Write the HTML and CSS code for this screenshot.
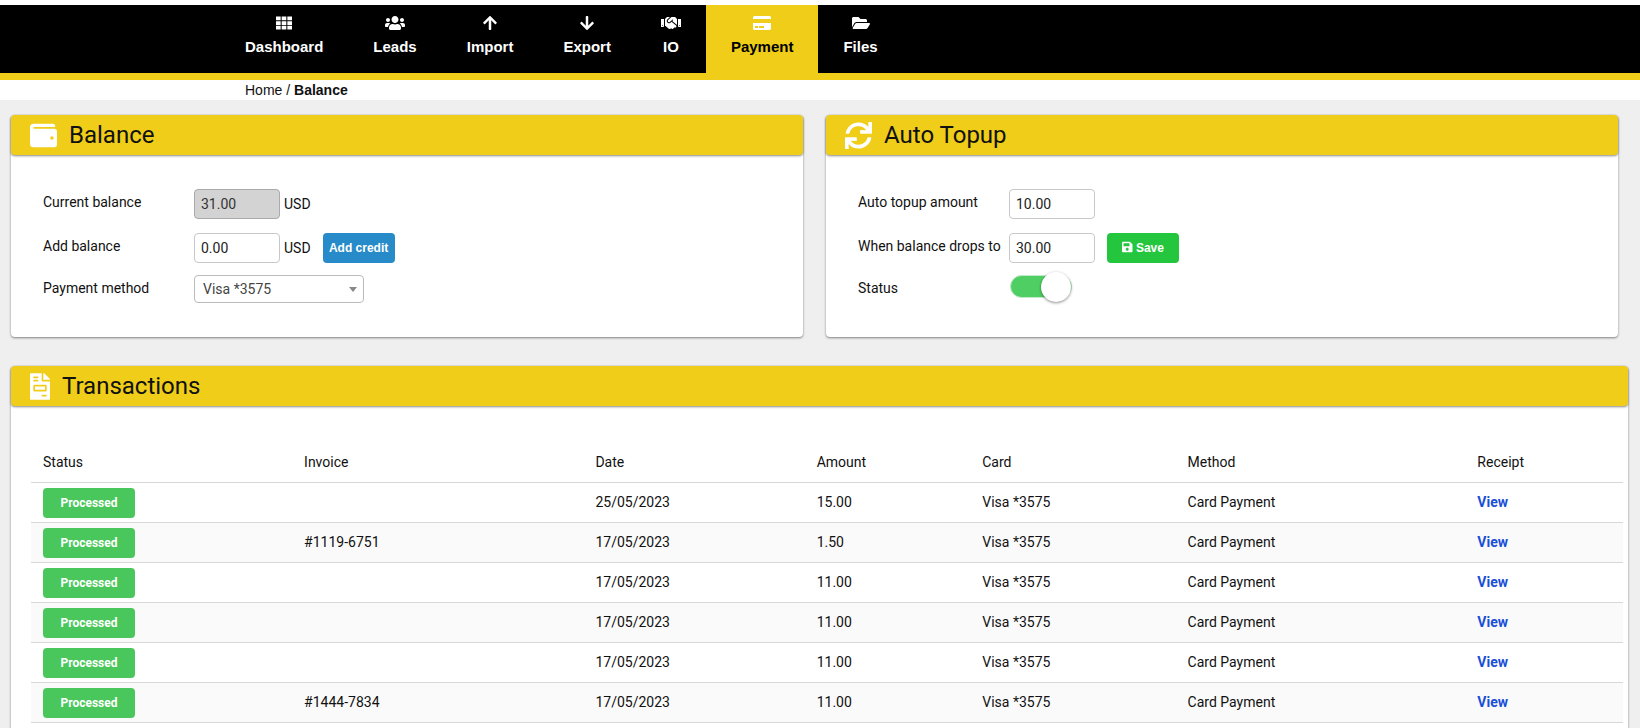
FILE: index.html
```html
<!DOCTYPE html>
<html lang="en">
<head>
  <meta charset="UTF-8">
  <title>Balance</title>
  <link rel="stylesheet" href="styles.css">
</head>
<body>

<header class="header">
  <nav class="nav">
    <a href="#">
      <svg viewBox="0 0 512 512"><path d="M0 48h149v120H0zM181 48h150v120H181zM363 48h149v120H363zM0 196h149v120H0zM181 196h150v120H181zM363 196h149v120H363zM0 344h149v120H0zM181 344h150v120H181zM363 344h149v120H363z"/></svg>
      Dashboard
    </a>
    <a href="#">
      <svg viewBox="0 0 640 512"><path d="M96 224c35.300 0 64-28.700 64-64s-28.700-64-64-64-64 28.700-64 64 28.700 64 64 64zm448 0c35.300 0 64-28.700 64-64s-28.700-64-64-64-64 28.700-64 64 28.700 64 64 64zm32 32h-64c-17.600 0-33.500 7.100-45.100 18.600 40.300 22.100 68.900 62 75.100 109.400h66c17.700 0 32-14.300 32-32v-32c0-35.300-28.700-64-64-64zm-256 0c61.900 0 112-50.100 112-112S381.900 32 320 32 208 82.100 208 144s50.100 112 112 112zm76.800 32h-8.300c-20.800 10-43.900 16-68.500 16s-47.600-6-68.500-16h-8.300C179.600 288 128 339.600 128 403.200V432c0 26.500 21.500 48 48 48h288c26.500 0 48-21.500 48-48v-28.800c0-63.600-51.600-115.200-115.200-115.200zm-223.700-13.400C161.500 263.100 145.600 256 128 256H64c-35.300 0-64 28.700-64 64v32c0 17.700 14.300 32 32 32h65.900c6.300-47.400 34.900-87.300 75.200-109.400z"/></svg>
      Leads
    </a>
    <a href="#">
      <svg viewBox="0 0 448 512"><path d="M34.900 289.500l-22.200-22.200c-9.400-9.400-9.400-24.600 0-33.900L207 39c9.400-9.400 24.600-9.400 33.900 0l194.300 194.300c9.400 9.400 9.400 24.600 0 33.900L413 289.400c-9.500 9.500-25 9.300-34.300-.4L264 168.600V456c0 13.300-10.700 24-24 24h-32c-13.300 0-24-10.700-24-24V168.600L69.200 289.100c-9.300 9.800-24.800 10-34.300.4z"/></svg>
      Import
    </a>
    <a href="#">
      <svg viewBox="0 0 448 512"><path d="M413.100 222.500l22.200 22.200c9.400 9.400 9.400 24.600 0 33.900L241 473c-9.400 9.400-24.600 9.400-33.900 0L12.700 278.600c-9.400-9.400-9.400-24.600 0-33.900l22.200-22.200c9.500-9.500 25-9.300 34.300.4L184 343.400V56c0-13.300 10.700-24 24-24h32c13.300 0 24 10.700 24 24v287.400l114.800-120.500c9.300-9.800 24.800-10 34.300-.4z"/></svg>
      Export
    </a>
    <a href="#">
      <svg viewBox="0 0 640 512"><path d="M434.7 64h-85.900c-8 0-15.700 3-21.600 8.400l-98.300 90c-.1.1-.2.3-.3.4-16.600 15.600-16.300 40.500-2.100 56 12.700 13.900 39.400 17.600 56.100 2.700.1-.1.3-.1.4-.2l79.900-73.200c6.500-5.900 16.700-5.500 22.600 1 6 6.500 5.500 16.600-1 22.600l-26.100 23.900L504 313.800c2.900 2.400 5.500 5 7.900 7.700V128l-54.600-54.600c-5.900-6-14.100-9.400-22.600-9.400zM544 128.200v223.900c0 17.700 14.300 32 32 32h64V128.200h-96zm48 223.900c-8.800 0-16-7.200-16-16s7.200-16 16-16 16 7.200 16 16-7.200 16-16 16zM0 384h64c17.700 0 32-14.300 32-32V128.200H0V384zm48-63.900c8.800 0 16 7.200 16 16s-7.200 16-16 16-16-7.200-16-16c0-8.900 7.200-16 16-16zm435.900 18.600L334.600 217.500l-30 27.500c-29.700 27.100-75.200 24.500-101.700-4.400-26.900-29.400-24.800-74.900 4.400-101.700L289.100 64h-83.800c-8.500 0-16.600 3.400-22.600 9.400L128 128v223.900h18.300l90.500 81.900c27.400 22.300 67.700 18.100 90-9.300l.2-.2 17.900 15.500c15.900 13 39.400 10.500 52.300-5.400l31.400-38.600 5.400 4.400c13.700 11.100 33.900 9.100 45-4.700l9.500-11.700c11.200-13.800 9.100-33.900-4.600-45.100z"/></svg>
      IO
    </a>
    <a href="#" class="current">
      <svg viewBox="0 0 576 512"><path d="M0 432c0 26.500 21.500 48 48 48h480c26.500 0 48-21.500 48-48V256H0v176zm192-68c0-6.600 5.400-12 12-12h136c6.600 0 12 5.400 12 12v40c0 6.600-5.400 12-12 12H204c-6.600 0-12-5.400-12-12v-40zm-128 0c0-6.600 5.400-12 12-12h72c6.600 0 12 5.400 12 12v40c0 6.600-5.400 12-12 12H76c-6.600 0-12-5.400-12-12v-40zM576 80v48H0V80c0-26.500 21.500-48 48-48h480c26.500 0 48 21.500 48 48z"/></svg>
      Payment
    </a>
    <a href="#">
      <svg viewBox="0 0 576 512"><path d="M572.700 292.100l-72.400 124.200A64 64 0 0 1 445 448H45c-18.500 0-30.100-20.100-20.700-36.100l72.400-124.200A64 64 0 0 1 152 256h400c18.500 0 30.100 20.100 20.700 36.100zM152 224h328v-48c0-26.500-21.500-48-48-48H272l-64-64H48C21.500 64 0 85.500 0 112v278l69.100-118.400C86.200 242.200 118 224 152 224z"/></svg>
      Files
    </a>
  </nav>
</header>

<div class="breadcrumb"><a href="#">Home</a> / <b>Balance</b></div>

<main class="content">
  <div class="cards">
    <section class="card">
      <h2 class="title">
        <svg viewBox="0 0 512 512"><path d="M461.200 128H80c-8.840 0-16-7.160-16-16s7.160-16 16-16h384c8.840 0 16-7.160 16-16 0-26.510-21.490-48-48-48H64C28.650 32 0 60.650 0 96v320c0 35.350 28.650 64 64 64h397.200c28.020 0 50.800-21.530 50.800-48V176c0-26.470-22.780-48-50.800-48zM416 336c-17.670 0-32-14.330-32-32s14.330-32 32-32 32 14.330 32 32-14.330 32-32 32z"/></svg>
        Balance
      </h2>
      <form class="form">
        <div class="row">
          <label for="current">Current balance</label>
          <input type="text" id="current" class="text" value="31.00" disabled>
          <span class="unit">USD</span>
        </div>
        <div class="row">
          <label for="add">Add balance</label>
          <input type="text" id="add" class="text" value="0.00">
          <span class="unit">USD</span>
          <button type="button" class="btn blue">Add credit</button>
        </div>
        <div class="row">
          <label for="method">Payment method</label>
          <div class="select">
            <select id="method"><option>Visa *3575</option></select>
          </div>
        </div>
      </form>
    </section>

    <section class="card">
      <h2 class="title">
        <svg viewBox="0 0 512 512"><path d="M440.650 12.570l4 82.770A247.160 247.160 0 0 0 255.830 8C134.730 8 33.910 94.920 12.290 209.820A12 12 0 0 0 24.090 224h49.050a12 12 0 0 0 11.670-9.260 175.910 175.910 0 0 1 317-56.940l-101.460-4.860a12 12 0 0 0-12.570 12v47.410a12 12 0 0 0 12 12H500a12 12 0 0 0 12-12V12a12 12 0 0 0-12-12h-47.370a12 12 0 0 0-11.980 12.570zM255.830 432a175.610 175.610 0 0 1-146-77.800l101.800 4.870a12 12 0 0 0 12.570-12v-47.400a12 12 0 0 0-12-12H12a12 12 0 0 0-12 12V500a12 12 0 0 0 12 12h47.350a12 12 0 0 0 12-12.600l-4.150-82.570A247.170 247.170 0 0 0 255.830 504c121.110 0 221.930-86.920 243.550-201.820a12 12 0 0 0-11.800-14.180h-49.050a12 12 0 0 0-11.670 9.260A175.860 175.860 0 0 1 255.830 432z"/></svg>
        Auto Topup
      </h2>
      <form class="form">
        <div class="row">
          <label for="topup">Auto topup amount</label>
          <input type="text" id="topup" class="text" value="10.00">
        </div>
        <div class="row">
          <label for="drops">When balance drops to</label>
          <input type="text" id="drops" class="text" value="30.00">
          <button type="button" class="btn green">
            <svg viewBox="0 0 448 512"><path d="M433.900 129.900l-83.900-83.900A48 48 0 0 0 316.100 32H48C21.500 32 0 53.500 0 80v352c0 26.500 21.500 48 48 48h352c26.500 0 48-21.500 48-48V163.900a48 48 0 0 0-14.100-34zM224 416c-35.300 0-64-28.700-64-64 0-35.300 28.700-64 64-64s64 28.700 64 64c0 35.300-28.700 64-64 64zm96-304.500V212c0 6.600-5.400 12-12 12H76c-6.600 0-12-5.400-12-12V108c0-6.600 5.400-12 12-12h228.500c3.200 0 6.200 1.300 8.500 3.500l3.500 3.500A12 12 0 0 1 320 111.500z"/></svg>
            Save
          </button>
        </div>
        <div class="row">
          <label for="status">Status</label>
          <input type="checkbox" id="status" class="switch" checked>
        </div>
      </form>
    </section>
  </div>

  <section class="card wide">
    <h2 class="title">
      <svg class="narrow" viewBox="0 0 384 512"><path d="M288 256H96v64h192v-64zm89-151L279.100 7c-4.500-4.500-10.600-7-17-7H256v128h128v-6.100c0-6.300-2.500-12.400-7-16.900zm-153 31V0H24C10.700 0 0 10.700 0 24v464c0 13.300 10.700 24 24 24h336c13.300 0 24-10.700 24-24V160H248c-13.200 0-24-10.800-24-24zM64 72c0-4.420 3.580-8 8-8h80c4.420 0 8 3.580 8 8v16c0 4.420-3.580 8-8 8H72c-4.420 0-8-3.580-8-8V72zm0 64c0-4.420 3.580-8 8-8h80c4.420 0 8 3.580 8 8v16c0 4.420-3.580 8-8 8H72c-4.420 0-8-3.580-8-8v-16zm256 304c0 4.420-3.580 8-8 8h-80c-4.420 0-8-3.580-8-8v-16c0-4.420 3.580-8 8-8h80c4.420 0 8 3.580 8 8v16zm0-200v96c0 8.840-7.160 16-16 16H80c-8.840 0-16-7.160-16-16v-96c0-8.840 7.160-16 16-16h224c8.840 0 16 7.160 16 16z"/></svg>
      Transactions
    </h2>
    <div class="tableWrap">
      <table class="table">
        <colgroup>
          <col class="cStatus"><col class="cInvoice"><col class="cDate"><col class="cAmount"><col class="cCard"><col class="cMethod"><col>
        </colgroup>
        <thead>
          <tr><th>Status</th><th>Invoice</th><th>Date</th><th>Amount</th><th>Card</th><th>Method</th><th>Receipt</th></tr>
        </thead>
        <tbody>
          <tr><td><span class="badge">Processed</span></td><td></td><td>25/05/2023</td><td>15.00</td><td>Visa *3575</td><td>Card Payment</td><td><a href="#">View</a></td></tr>
          <tr><td><span class="badge">Processed</span></td><td>#1119-6751</td><td>17/05/2023</td><td>1.50</td><td>Visa *3575</td><td>Card Payment</td><td><a href="#">View</a></td></tr>
          <tr><td><span class="badge">Processed</span></td><td></td><td>17/05/2023</td><td>11.00</td><td>Visa *3575</td><td>Card Payment</td><td><a href="#">View</a></td></tr>
          <tr><td><span class="badge">Processed</span></td><td></td><td>17/05/2023</td><td>11.00</td><td>Visa *3575</td><td>Card Payment</td><td><a href="#">View</a></td></tr>
          <tr><td><span class="badge">Processed</span></td><td></td><td>17/05/2023</td><td>11.00</td><td>Visa *3575</td><td>Card Payment</td><td><a href="#">View</a></td></tr>
          <tr><td><span class="badge">Processed</span></td><td>#1444-7834</td><td>17/05/2023</td><td>11.00</td><td>Visa *3575</td><td>Card Payment</td><td><a href="#">View</a></td></tr>
        </tbody>
      </table>
    </div>
  </section>
</main>

</body>
</html>
```
FILE: styles.css
```css
* { margin: 0; padding: 0; box-sizing: border-box; }
body { background: #efefef; color: #111;
  font: 14px/20px Roboto, "Liberation Sans", sans-serif; }
a { text-decoration: none; color: inherit; }
svg { fill: currentColor; }

/* top menu */
.header { background: #000; border-top: 5px solid #fff;
  border-bottom: 7px solid #efcd18; padding: 0 220px; }
.nav { display: flex; height: 68px; }
.nav a { display: flex; flex-direction: column; align-items: center;
  gap: 6px; padding: 10px 25px 0; color: #fff;
  font: bold 15px/20px "Liberation Sans", Arial, sans-serif; }
.nav svg { height: 16px; }
.nav a.current { background: #efcd18; color: #000; }
.nav a.current svg { fill: #fff; }

.breadcrumb { background: #fff; padding: 0 245px;
  font: 14px/20px "Liberation Sans", Arial, sans-serif; }

/* cards */
.content { padding: 15px 12px 0 11px; }
.cards { display: grid; grid-template-columns: 1fr 1fr;
  gap: 23px; padding-right: 10px; margin-bottom: 29px; }
.card { background: #fff; border-radius: 4px;
  box-shadow: 0 1px 3px rgba(0,0,0,.2), 0 1px 2px rgba(0,0,0,.3); }
.title { display: flex; align-items: center; gap: 12px;
  height: 40px; padding: 0 19px; background: #efcd18; border-radius: 4px;
  box-shadow: 0 1px 3px rgba(0,0,0,.2), 0 1px 2px rgba(0,0,0,.3);
  font-size: 24px; font-weight: 400; line-height: 40px; }
.title svg { width: 27px; height: 27px; fill: #fff; }
.title svg.narrow { width: 20px; }

/* forms */
.form { padding: 34px 32px; }
.row { display: flex; align-items: center; height: 30px; margin-bottom: 14px; }
.row:last-child { height: 28px; margin-bottom: 0; margin-top: -2px; }
.row label { width: 151px; padding-bottom: 4px; white-space: nowrap; }
.row:last-child label { padding-bottom: 2px; }
.text { width: 86px; height: 30px; padding: 0 6px;
  border: 1px solid #c8c8cc; border-radius: 4px; background: #fff;
  font: 14px Roboto, sans-serif; color: #222; }
.text:disabled { background: #d3d3d3; border-color: #aaa; color: #333; }
.unit { margin-left: 4px; }
.btn { width: 72px; height: 30px; margin-left: 12px; border: none;
  border-radius: 4px; color: #fff; white-space: nowrap; cursor: pointer;
  font: bold 12px "Liberation Sans", Arial, sans-serif; }
.btn svg { height: 12px; vertical-align: -1px; }
.blue { background: #268bc8; }
.green { background: #24c63d; }
.select { position: relative; width: 170px; }
.select select { width: 100%; height: 28px; padding: 0 8px;
  border: 1px solid #bbb; border-radius: 4px; background: #fff;
  appearance: none; font: 14px Roboto, sans-serif; color: #444; }
.select::after { content: ""; position: absolute; right: 7px; top: 12px;
  border: 4px solid transparent; border-top: 5px solid #888;
  border-bottom: 0; pointer-events: none; }
.switch { appearance: none; display: flex; align-items: center;
  align-self: flex-start; justify-content: flex-end;
  width: 62px; height: 23px; margin-left: 1px;
  border: 1px solid #c4e8ca; border-radius: 12px;
  background: #4fcf63; cursor: pointer; }
.switch::before { content: ""; width: 30px; height: 30px; flex: none;
  border-radius: 50%; background: #fff; box-shadow: 0 1px 3px rgba(0,0,0,.45); }

/* transactions */
.tableWrap { padding: 36px 5px 50px 20px; }
.table { width: 100%; table-layout: fixed; border-collapse: collapse; }
.table th, .table td { height: 40px; padding: 0 12px; text-align: left;
  font-weight: 400; border-bottom: 1px solid #d8d8d8; }
.table tbody tr:nth-child(even) { background: #fafafa; }
.table td a { color: #1a4fd6; font-weight: 700; }
.cStatus { width: 16.4%; }
.cInvoice { width: 18.3%; }
.cDate { width: 13.9%; }
.cAmount { width: 10.4%; }
.cCard { width: 12.9%; }
.cMethod { width: 18.2%; }
.badge { display: block; width: 92px; margin-top: 2px; border-radius: 4px;
  background: #49c75c; color: #fff; text-align: center;
  font-size: 12px; font-weight: 700; line-height: 30px; }
```
